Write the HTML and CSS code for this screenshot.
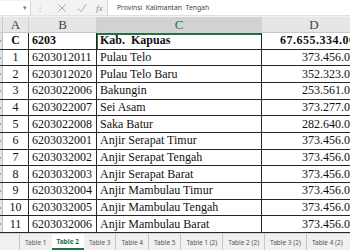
FILE: index.html
```html
<!DOCTYPE html>
<html lang="id">
<head>
    <meta charset="UTF-8">
    <title>Kab. Kapuas</title>
    <link rel="stylesheet" href="styles.css">
</head>
<body>
    <div class="window">
        <div class="formula-bar">
            <div class="name-box"><span class="drop">▾</span></div>
            <span class="grip">⋮</span>
            <svg class="fb-icon" width="10" height="10" viewBox="0 0 10 10"><path d="M1.5 1.5 L8.5 8.5 M8.5 1.5 L1.5 8.5" stroke="#a6a6a6" stroke-width="1" fill="none"/></svg>
            <svg class="fb-icon" width="10" height="10" viewBox="0 0 10 10"><path d="M1 5.5 L4 8.5 L9 1.5" stroke="#a6a6a6" stroke-width="1" fill="none"/></svg>
            <span class="fx">fx</span>
            <div class="formula-input">Provinsi&nbsp; Kalimantan&nbsp; Tengah</div>
        </div>

        <div class="col-headers">
            <div class="corner"></div>
            <div class="col-head">A</div>
            <div class="col-head">B</div>
            <div class="col-head selected">C</div>
            <div class="col-head">D</div>
        </div>

        <div class="grid">
            <div class="row total">
                <div class="rh"></div>
                <div class="cell center">C</div>
                <div class="cell">6203</div>
                <div class="cell sel-left">Kab.&nbsp; Kapuas</div>
                <div class="cell num">67.655.334.000</div>
            </div>
            <div class="row"><div class="rh"></div><div class="cell center">1</div><div class="cell">6203012011</div><div class="cell">Pulau Telo</div><div class="cell num">373.456.000</div></div>
            <div class="row"><div class="rh"></div><div class="cell center">2</div><div class="cell">6203012020</div><div class="cell">Pulau Telo Baru</div><div class="cell num">352.323.000</div></div>
            <div class="row"><div class="rh"></div><div class="cell center">3</div><div class="cell">6203022006</div><div class="cell">Bakungin</div><div class="cell num">253.561.000</div></div>
            <div class="row"><div class="rh"></div><div class="cell center">4</div><div class="cell">6203022007</div><div class="cell">Sei Asam</div><div class="cell num">373.277.000</div></div>
            <div class="row"><div class="rh"></div><div class="cell center">5</div><div class="cell">6203022008</div><div class="cell">Saka Batur</div><div class="cell num">282.640.000</div></div>
            <div class="row"><div class="rh"></div><div class="cell center">6</div><div class="cell">6203032001</div><div class="cell">Anjir Serapat Timur</div><div class="cell num">373.456.000</div></div>
            <div class="row"><div class="rh"></div><div class="cell center">7</div><div class="cell">6203032002</div><div class="cell">Anjir Serapat Tengah</div><div class="cell num">373.456.000</div></div>
            <div class="row"><div class="rh"></div><div class="cell center">8</div><div class="cell">6203032003</div><div class="cell">Anjir Serapat Barat</div><div class="cell num">373.456.000</div></div>
            <div class="row"><div class="rh"></div><div class="cell center">9</div><div class="cell">6203032004</div><div class="cell">Anjir Mambulau Timur</div><div class="cell num">373.456.000</div></div>
            <div class="row"><div class="rh"></div><div class="cell center">10</div><div class="cell">6203032005</div><div class="cell">Anjir Mambulau Tengah</div><div class="cell num">373.456.000</div></div>
            <div class="row"><div class="rh"></div><div class="cell center">11</div><div class="cell">6203032006</div><div class="cell">Anjir Mambulau Barat</div><div class="cell num">373.456.000</div></div>
        </div>

        <div class="tabs">
            <div class="tab-nav"></div>
            <div class="tab">Table 1</div>
            <div class="tab active">Table 2</div>
            <div class="tab">Table 3</div>
            <div class="tab">Table 4</div>
            <div class="tab">Table 5</div>
            <div class="tab">Table 1 (2)</div>
            <div class="tab">Table 2 (2)</div>
            <div class="tab">Table 3 (2)</div>
            <div class="tab">Table 4 (2)</div>
        </div>
    </div>
</body>
</html>
```

FILE: styles.css
```css
* {
    margin: 0;
    padding: 0;
    box-sizing: border-box;
}

body {
    width: 350px;
    height: 250px;
    overflow: hidden;
    background: #ffffff;
}

.window {
    width: 350px;
    height: 250px;
    display: flex;
    flex-direction: column;
    overflow: hidden;
}

/* formula bar */
.formula-bar {
    height: 16px;
    flex: none;
    display: flex;
    align-items: center;
    background: #f3f3f3;
    border-bottom: 1px solid #e1e1e1;
    font-family: "Noto Sans", sans-serif;
}

.name-box {
    width: 31px;
    height: 14px;
    background: #ffffff;
    border-right: 1px solid #d6d6d6;
    display: flex;
    justify-content: flex-end;
    align-items: center;
    padding-right: 3px;
}

.drop {
    font-size: 7px;
    color: #777777;
}

.grip {
    width: 14px;
    font-size: 8px;
    color: #b0b0b0;
    text-align: center;
    margin-left: 2px;
}

.fb-icon {
    margin-left: 10px;
}

.fx {
    font-family: "Liberation Serif", serif;
    font-style: italic;
    font-size: 9px;
    color: #8a8a8a;
    margin-left: 9px;
    width: 10px;
}

.formula-input {
    flex: 1;
    height: 15px;
    margin-left: 1px;
    background: #ffffff;
    border-left: 1px solid #d6d6d6;
    padding-left: 9px;
    font-size: 6.8px;
    line-height: 15px;
    color: #444444;
    white-space: nowrap;
}

/* column headers */
.col-headers {
    height: 17px;
    flex: none;
    display: grid;
    grid-template-columns: 3px 26px 68px 165px 105px;
    background: #e6e6e6;
    border-top: 1px solid #f3f3f3;
    border-bottom: 1px solid #c8c8c8;
    font-family: "Liberation Serif", serif;
    font-size: 13px;
    color: #444444;
}

.corner {
    border-right: 1px solid #c8c8c8;
}

.col-head {
    border-right: 1px solid #d0d0d0;
    text-align: center;
    line-height: 16px;
}

.col-head.selected {
    background: #d2d2d2;
    color: #217346;
    border-bottom: 2px solid #217346;
}

/* cells */
.grid {
    height: 200px;
    flex: none;
    display: grid;
    grid-template-rows: repeat(12, 1fr);
    font-family: "Liberation Serif", serif;
    font-size: 12px;
    color: #111111;
}

.row {
    display: grid;
    grid-template-columns: 3px 26px 68px 165px 105px;
    border-bottom: 1px solid #262626;
}

.rh {
    background: #e6e6e6;
    border-right: 1px solid #bcbcbc;
    position: relative;
}

.rh::after {
    content: "";
    position: absolute;
    left: 0;
    top: 7px;
    width: 1px;
    height: 2px;
    background: #8aa0b8;
}

.cell {
    border-right: 1px solid #262626;
    padding: 0 3px;
    display: flex;
    align-items: center;
    white-space: nowrap;
    overflow: hidden;
}

.cell.center {
    justify-content: center;
}

.cell.num {
    justify-content: flex-end;
    padding-right: 4px;
    overflow: visible;
}

.row.total .cell {
    font-weight: bold;
}

.row.total .cell.num {
    letter-spacing: 0.5px;
}

.cell.sel-left {
    box-shadow: inset 1px 0 0 #217346;
}

/* sheet tabs */
.tabs {
    flex: 1;
    display: flex;
    align-items: stretch;
    background: #f0f0f0;
    border-top: 1px solid #d4d4d4;
    font-family: "Noto Sans", sans-serif;
    font-size: 6.5px;
    color: #555555;
    white-space: nowrap;
}

.tab-nav {
    width: 19px;
    flex: none;
}

.tab {
    padding: 0 5px;
    display: flex;
    align-items: center;
    border-left: 1px solid #c6c6c6;
}

.tab.active {
    background: #ffffff;
    color: #217346;
    font-weight: bold;
    border-bottom: 2px solid #217346;
    border-left: none;
}

.tab.active + .tab {
    border-left: none;
}
```
